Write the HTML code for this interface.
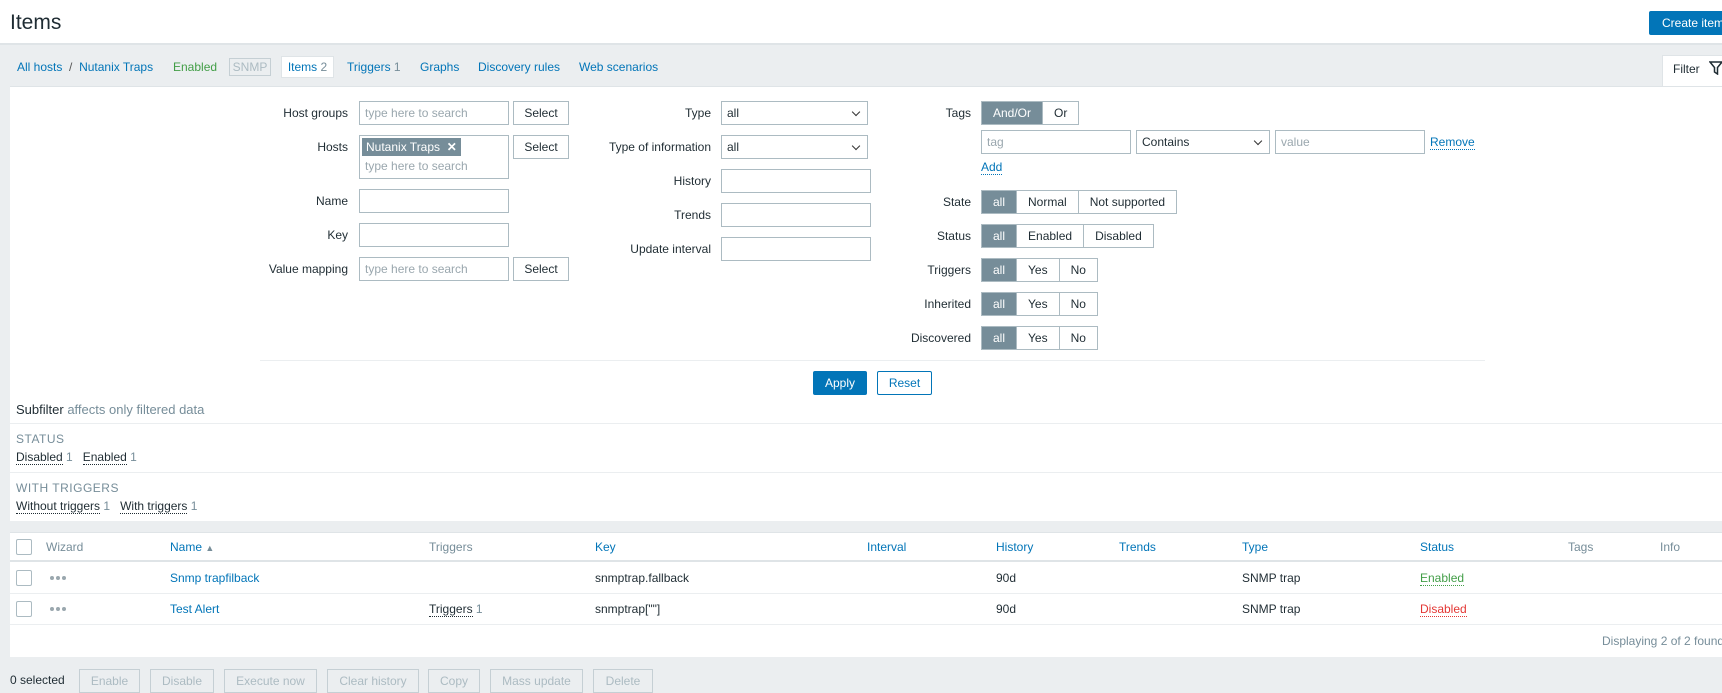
<!DOCTYPE html>
<html><head><meta charset="utf-8"><style>
*{box-sizing:border-box;margin:0;padding:0}
body{width:1722px;height:687px;overflow:hidden;background:#ebeef0;font-family:"Liberation Sans",Arial,sans-serif;font-size:12px;color:#1f2c33;position:relative}
.a{position:absolute}
a,.lk{color:#0275b8;text-decoration:none}
.in{position:absolute;height:24px;border:1px solid #acbbc2;background:#fff;padding:4px 5px;color:#9aa7ae;white-space:nowrap}
.btn{position:absolute;height:24px;border:1px solid #acbbc2;background:#fff;text-align:center;line-height:22px;color:#1f2c33}
.lbl{position:absolute;text-align:right;line-height:24px;white-space:nowrap}
.seg{position:absolute;height:24px;display:flex;border:1px solid #acbbc2;background:#fff}
.seg span{padding:0 11px;line-height:22px;border-left:1px solid #acbbc2}
.seg span:first-child{border-left:0;background:#768d99;color:#fff;padding:0 11px}
.sel{position:absolute;height:24px;border:1px solid #acbbc2;background:#fff;padding:0 5px;line-height:22px}
.sel:after{content:"";position:absolute;right:8px;top:7px;width:5px;height:5px;border-right:1px solid #333;border-bottom:1px solid #333;transform:rotate(45deg)}
.dot{border-bottom:1px dotted #1f2c33}
.cb{position:absolute;width:16px;height:16px;border:1px solid #acbbc2;background:#fff;border-radius:2px}
.bb{position:absolute;top:669px;height:24px;border:1px solid #c5cfd4;color:#acbbc2;background:#ebeef0;text-align:center;line-height:22px}
.dots{position:absolute;width:20px;height:5px;display:flex;gap:2px}
.dots i{display:block;width:4px;height:4px;border-radius:50%;background:#9aa7ae}
</style></head><body>
<div class="a" style="left:0;top:0;width:1722px;height:45px;background:#fff;border-bottom:2px solid #dfe4e7"></div>
<div class="a" style="left:10px;top:11px;font-size:21px;color:#1f2c33">Items</div>
<div class="a" style="left:1649px;top:11px;width:80px;height:24px;background:#0275b8;color:#fff;line-height:24px;padding-left:13px;border-radius:2px;white-space:nowrap">Create item</div>

<div class="a" style="left:17px;top:60px"><a>All hosts</a> <span style="color:#555">&nbsp;/&nbsp;</span> <a>Nutanix Traps</a></div>
<div class="a" style="left:173px;top:60px;color:#429e47">Enabled</div>
<div class="a" style="left:229px;top:58px;width:42px;height:18px;border:1px solid #c5cfd4;color:#acbbc2;text-align:center;line-height:16px">SNMP</div>
<div class="a" style="left:281px;top:56px;width:53px;height:22px;background:#fff;border:1px solid #dfe4e7;text-align:center;line-height:20px;color:#0275b8">Items <span style="color:#768d99">2</span></div>
<div class="a" style="left:347px;top:60px;color:#0275b8">Triggers <span style="color:#768d99">1</span></div>
<div class="a" style="left:420px;top:60px;color:#0275b8">Graphs</div>
<div class="a" style="left:478px;top:60px;color:#0275b8">Discovery rules</div>
<div class="a" style="left:579px;top:60px;color:#0275b8">Web scenarios</div>
<div class="a" style="left:1662px;top:55px;width:90px;height:32px;background:#fff;border:1px solid #dfe4e7;border-bottom:0;padding:5px 10px;white-space:nowrap">Filter <svg width="14" height="14" style="vertical-align:-2px;margin-left:6px" viewBox="0 0 14 14"><path d="M1 1h12L8.5 6.5V13L5.5 11V6.5Z" fill="none" stroke="#1f2c33" stroke-width="1.5"/></svg></div>

<div class="a" style="left:10px;top:86px;width:1712px;height:435px;background:#fff;border-top:1px solid #dfe4e7"></div>
<div class="lbl" style="left:200px;width:148px;top:101px">Host groups</div>
<div class="in" style="left:359px;top:101px;width:150px">type here to search</div>
<div class="btn" style="left:513px;top:101px;width:56px">Select</div>
<div class="lbl" style="left:200px;width:148px;top:135px">Hosts</div>
<div class="in" style="left:359px;top:135px;width:150px;height:44px;padding:2px"><span style="display:inline-block;background:#768d99;color:#fff;padding:1px 4px;height:18px;line-height:16px">Nutanix Traps &nbsp;<b>✕</b></span><div style="padding:3px 3px;color:#9aa7ae">type here to search</div></div>
<div class="btn" style="left:513px;top:135px;width:56px">Select</div>
<div class="lbl" style="left:200px;width:148px;top:189px">Name</div>
<div class="in" style="left:359px;top:189px;width:150px"></div>
<div class="lbl" style="left:200px;width:148px;top:223px">Key</div>
<div class="in" style="left:359px;top:223px;width:150px"></div>
<div class="lbl" style="left:200px;width:148px;top:257px">Value mapping</div>
<div class="in" style="left:359px;top:257px;width:150px">type here to search</div>
<div class="btn" style="left:513px;top:257px;width:56px">Select</div>

<div class="lbl" style="left:560px;width:151px;top:101px">Type</div>
<div class="sel" style="left:721px;top:101px;width:147px">all</div>
<div class="lbl" style="left:560px;width:151px;top:135px">Type of information</div>
<div class="sel" style="left:721px;top:135px;width:147px">all</div>
<div class="lbl" style="left:560px;width:151px;top:169px">History</div>
<div class="in" style="left:721px;top:169px;width:150px"></div>
<div class="lbl" style="left:560px;width:151px;top:203px">Trends</div>
<div class="in" style="left:721px;top:203px;width:150px"></div>
<div class="lbl" style="left:560px;width:151px;top:237px">Update interval</div>
<div class="in" style="left:721px;top:237px;width:150px"></div>

<div class="lbl" style="left:880px;width:91px;top:101px">Tags</div>
<div class="seg" style="left:981px;top:101px"><span>And/Or</span><span>Or</span></div>
<div class="in" style="left:981px;top:130px;width:150px">tag</div>
<div class="sel" style="left:1136px;top:130px;width:134px;color:#1f2c33">Contains</div>
<div class="in" style="left:1275px;top:130px;width:150px">value</div>
<div class="a lk" style="left:1430px;top:135px;border-bottom:1px dotted #0275b8">Remove</div>
<div class="a lk" style="left:981px;top:160px;border-bottom:1px dotted #0275b8">Add</div>
<div class="lbl" style="left:880px;width:91px;top:190px">State</div>
<div class="seg" style="left:981px;top:190px"><span>all</span><span>Normal</span><span>Not supported</span></div>
<div class="lbl" style="left:880px;width:91px;top:224px">Status</div>
<div class="seg" style="left:981px;top:224px"><span>all</span><span>Enabled</span><span>Disabled</span></div>
<div class="lbl" style="left:880px;width:91px;top:258px">Triggers</div>
<div class="seg" style="left:981px;top:258px"><span>all</span><span>Yes</span><span>No</span></div>
<div class="lbl" style="left:880px;width:91px;top:292px">Inherited</div>
<div class="seg" style="left:981px;top:292px"><span>all</span><span>Yes</span><span>No</span></div>
<div class="lbl" style="left:880px;width:91px;top:326px">Discovered</div>
<div class="seg" style="left:981px;top:326px"><span>all</span><span>Yes</span><span>No</span></div>

<div class="a" style="left:260px;top:360px;width:1225px;height:1px;background:#ebeef0"></div>
<div class="a" style="left:813px;top:371px;width:54px;height:24px;background:#0275b8;color:#fff;text-align:center;line-height:24px;border-radius:2px">Apply</div>
<div class="a" style="left:877px;top:371px;width:55px;height:24px;border:1px solid #0275b8;color:#0275b8;text-align:center;line-height:22px;border-radius:2px">Reset</div>

<div class="a" style="left:16px;top:402px;font-size:13px">Subfilter <span style="color:#768d99">affects only filtered data</span></div>
<div class="a" style="left:10px;top:423px;width:1712px;height:1px;background:#ebeef0"></div>
<div class="a" style="left:16px;top:432px;color:#768d99;letter-spacing:0.5px">STATUS</div>
<div class="a" style="left:16px;top:450px"><span class="dot">Disabled</span> <span style="color:#768d99">1</span> &nbsp; <span class="dot">Enabled</span> <span style="color:#768d99">1</span></div>
<div class="a" style="left:10px;top:472px;width:1712px;height:1px;background:#ebeef0"></div>
<div class="a" style="left:16px;top:481px;color:#768d99;letter-spacing:0.5px">WITH TRIGGERS</div>
<div class="a" style="left:16px;top:499px"><span class="dot">Without triggers</span> <span style="color:#768d99">1</span> &nbsp; <span class="dot">With triggers</span> <span style="color:#768d99">1</span></div>

<div class="a" style="left:10px;top:532px;width:1712px;height:125px;background:#fff;border-top:1px solid #dfe4e7"></div>
<div class="a" style="left:10px;top:560px;width:1712px;height:2px;background:#dfe4e7"></div>
<div class="a" style="left:10px;top:593px;width:1712px;height:1px;background:#ebeef0"></div>
<div class="a" style="left:10px;top:624px;width:1712px;height:1px;background:#ebeef0"></div>
<div class="cb" style="left:16px;top:539px"></div>
<div class="a" style="left:46px;top:540px;color:#768d99">Wizard</div>
<div class="a lk" style="left:170px;top:540px">Name <span style="font-size:9px;color:#768d99">▲</span></div>
<div class="a" style="left:429px;top:540px;color:#768d99">Triggers</div>
<div class="a lk" style="left:595px;top:540px">Key</div>
<div class="a lk" style="left:867px;top:540px">Interval</div>
<div class="a lk" style="left:996px;top:540px">History</div>
<div class="a lk" style="left:1119px;top:540px">Trends</div>
<div class="a lk" style="left:1242px;top:540px">Type</div>
<div class="a lk" style="left:1420px;top:540px">Status</div>
<div class="a" style="left:1568px;top:540px;color:#768d99">Tags</div>
<div class="a" style="left:1660px;top:540px;color:#768d99">Info</div>

<div class="cb" style="left:16px;top:570px"></div>
<div class="dots" style="left:50px;top:576px"><i></i><i></i><i></i></div>
<div class="a lk" style="left:170px;top:571px">Snmp trapfilback</div>
<div class="a" style="left:595px;top:571px">snmptrap.fallback</div>
<div class="a" style="left:996px;top:571px">90d</div>
<div class="a" style="left:1242px;top:571px">SNMP trap</div>
<div class="a" style="left:1420px;top:571px;color:#429e47;border-bottom:1px dotted #429e47">Enabled</div>

<div class="cb" style="left:16px;top:601px"></div>
<div class="dots" style="left:50px;top:607px"><i></i><i></i><i></i></div>
<div class="a lk" style="left:170px;top:602px">Test Alert</div>
<div class="a" style="left:429px;top:602px"><span class="dot">Triggers</span> <span style="color:#768d99">1</span></div>
<div class="a" style="left:595px;top:602px">snmptrap[""]</div>
<div class="a" style="left:996px;top:602px">90d</div>
<div class="a" style="left:1242px;top:602px">SNMP trap</div>
<div class="a" style="left:1420px;top:602px;color:#e33734;border-bottom:1px dotted #e33734">Disabled</div>
<div class="a" style="left:1602px;top:634px;color:#768d99;white-space:nowrap">Displaying 2 of 2 found</div>

<div class="a" style="left:10px;top:673px">0 selected</div>
<div class="bb" style="left:79px;width:61px">Enable</div>
<div class="bb" style="left:150px;width:64px">Disable</div>
<div class="bb" style="left:224px;width:93px">Execute now</div>
<div class="bb" style="left:327px;width:92px">Clear history</div>
<div class="bb" style="left:428px;width:52px">Copy</div>
<div class="bb" style="left:490px;width:93px">Mass update</div>
<div class="bb" style="left:593px;width:60px">Delete</div>
</body></html>
